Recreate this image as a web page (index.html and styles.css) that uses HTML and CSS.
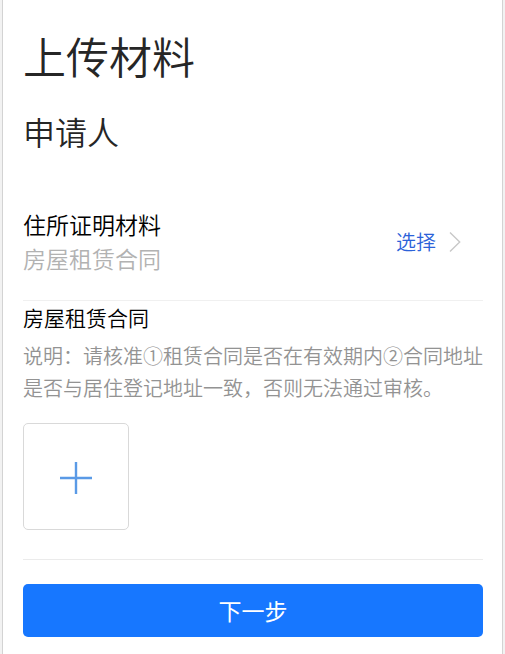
FILE: index.html
```html
<!DOCTYPE html>
<html lang="zh-CN">
<head>
<meta charset="utf-8">
<meta name="viewport" content="width=device-width, initial-scale=1">
<title>上传材料</title>
<link rel="stylesheet" href="styles.css">
</head>
<body>
<main class="page">
  <h1 class="title">上传材料</h1>
  <h2 class="subtitle">申请人</h2>
  <section class="item">
    <div class="item-text">
      <div class="item-name">住所证明材料</div>
      <div class="item-value">房屋租赁合同</div>
    </div>
    <button type="button" class="choose">
      <span>选择</span>
      <svg class="chevron" viewBox="0 0 12 20" aria-hidden="true"><path d="M1 0.5 L10.7 10 L1 19.5"/></svg>
    </button>
  </section>
  <section class="material">
    <h3 class="material-name">房屋租赁合同</h3>
    <p class="note">说明：请核准①租赁合同是否在有效期内②合同地址是否与居住登记地址一致，否则无法通过审核。</p>
    <button type="button" class="upload" aria-label="添加图片">
      <svg class="plus" viewBox="0 0 32 34" aria-hidden="true"><path d="M0 18H32M16 2V34"/></svg>
    </button>
  </section>
  <button type="button" class="next">下一步</button>
</main>
</body>
</html>
```
FILE: styles.css
```css
* {
  box-sizing: border-box;
}

body {
  margin: 0;
  background: #f2f2f2;
  font-family: "Noto Sans CJK SC", sans-serif;
  font-weight: 350;
  color: #000;
}

h1, h2, h3, p {
  margin: 0;
  font-weight: 350;
}

button {
  margin: 0;
  padding: 0;
  border: 0;
  background: none;
  font: inherit;
  cursor: pointer;
}

.page {
  min-height: 100vh;
  margin: 0 2px;
  padding: 25px 19px 16px 20px;
  border: solid #d3d3d3;
  border-width: 0 1px;
  background: #fff;
}

.title {
  font-size: 43px;
  line-height: 60px;
  color: #262626;
}

.subtitle {
  margin-top: 24px;
  font-size: 32px;
  line-height: 44px;
  color: #262626;
}

.item {
  display: flex;
  align-items: center;
  justify-content: space-between;
  margin-top: 54px;
  padding-bottom: 25px;
  border-bottom: 1px solid #f0f0f0;
}

.item-text {
  font-size: 23px;
  line-height: 34px;
}

.item-value {
  color: #b2b2b2;
}

.choose {
  display: flex;
  align-items: center;
  gap: 13px;
  padding: 2px 22px 0 0;
  font-size: 20px;
  line-height: 32px;
  color: #2b62d9;
}

.chevron {
  width: 12px;
  height: 20px;
  fill: none;
  stroke: #c8c8c8;
  stroke-width: 1.4;
}

.material {
  padding-bottom: 29px;
  border-bottom: 1px solid #ebebeb;
}

.material-name {
  font-size: 21px;
  line-height: 32px;
}

.note {
  margin-top: 7px;
  font-size: 20px;
  line-height: 32px;
  color: #939393;
}

.upload {
  display: flex;
  align-items: center;
  justify-content: center;
  width: 106px;
  height: 107px;
  margin-top: 19px;
  border: 1px solid #d9d9d9;
  border-radius: 5px;
}

.plus {
  width: 32px;
  height: 34px;
  fill: none;
  stroke: #5a9ae6;
  stroke-width: 2.4;
}

.next {
  display: block;
  width: 100%;
  margin-top: 24px;
  border-radius: 5px;
  background: #1777ff;
  font-size: 23px;
  font-weight: 400;
  line-height: 53px;
  color: #fff;
}
```
